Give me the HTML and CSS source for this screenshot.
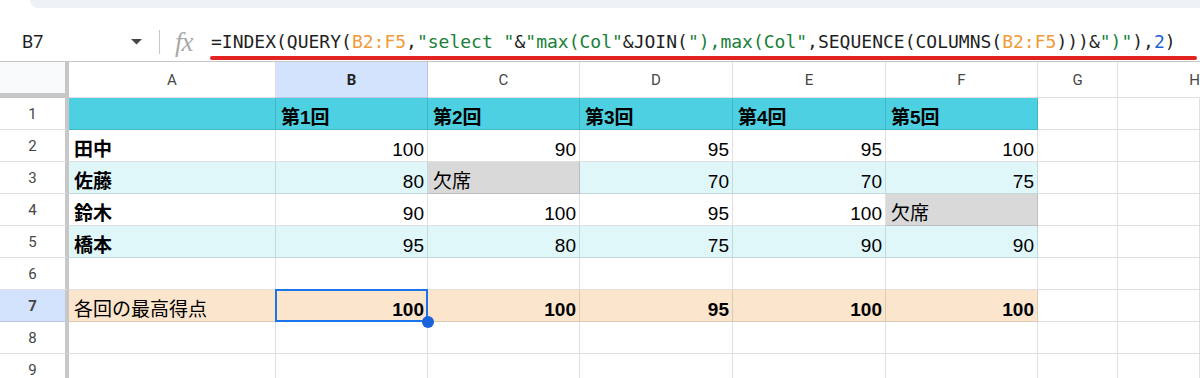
FILE: index.html
```html
<!DOCTYPE html>
<html lang="ja">
<head>
<meta charset="utf-8">
<link rel="stylesheet" href="styles.css">
</head>
<body>
<div class="topband"></div>
<div class="fbar">
  <div class="namebox">
    <span class="name">B7</span>
    <svg class="caret" width="11" height="6" viewBox="0 0 11 6"><path d="M0 0 L11 0 L5.5 5.5 Z" fill="#444746"/></svg>
  </div>
  <div class="divider"></div>
  <span class="fx">fx</span>
  <div class="formula"><span>=INDEX(QUERY(</span><span class="ref">B2:F5</span><span>,</span><span class="str">"select "</span><span>&amp;</span><span class="str">"max(Col"</span><span>&amp;JOIN(</span><span class="str">"),max(Col"</span><span>,SEQUENCE(COLUMNS(</span><span class="ref">B2:F5</span><span>)))&amp;</span><span class="str">")"</span><span>),</span><span class="num">2</span><span>)</span></div>
</div>
<div class="sheetwrap">
<div class="sheet">
  <div class="corner"></div>
  <div class="ch">A</div><div class="ch on">B</div><div class="ch">C</div><div class="ch">D</div><div class="ch">E</div><div class="ch">F</div><div class="ch">G</div><div class="ch last">H</div>

  <div class="rh">1</div>
  <div class="c hd"></div><div class="c hd b">第1回</div><div class="c hd b">第2回</div><div class="c hd b">第3回</div><div class="c hd b">第4回</div><div class="c hd b">第5回</div><div class="c"></div><div class="c"></div>

  <div class="rh">2</div>
  <div class="c b">田中</div><div class="c n">100</div><div class="c n">90</div><div class="c n">95</div><div class="c n">95</div><div class="c n">100</div><div class="c"></div><div class="c"></div>

  <div class="rh">3</div>
  <div class="c alt b">佐藤</div><div class="c alt n">80</div><div class="c gray">欠席</div><div class="c alt n">70</div><div class="c alt n">70</div><div class="c alt n">75</div><div class="c"></div><div class="c"></div>

  <div class="rh">4</div>
  <div class="c b">鈴木</div><div class="c n">90</div><div class="c n">100</div><div class="c n">95</div><div class="c n">100</div><div class="c gray">欠席</div><div class="c"></div><div class="c"></div>

  <div class="rh">5</div>
  <div class="c alt b">橋本</div><div class="c alt n">95</div><div class="c alt n">80</div><div class="c alt n">75</div><div class="c alt n">90</div><div class="c alt n">90</div><div class="c"></div><div class="c"></div>

  <div class="rh">6</div>
  <div class="c"></div><div class="c"></div><div class="c"></div><div class="c"></div><div class="c"></div><div class="c"></div><div class="c"></div><div class="c"></div>

  <div class="rh on">7</div>
  <div class="c peach">各回の最高得点</div><div class="c peach n b sel">100</div><div class="c peach n b">100</div><div class="c peach n b">95</div><div class="c peach n b">100</div><div class="c peach n b">100</div><div class="c"></div><div class="c"></div>

  <div class="rh">8</div>
  <div class="c"></div><div class="c"></div><div class="c"></div><div class="c"></div><div class="c"></div><div class="c"></div><div class="c"></div><div class="c"></div>

  <div class="rh">9</div>
  <div class="c"></div><div class="c"></div><div class="c"></div><div class="c"></div><div class="c"></div><div class="c"></div><div class="c"></div><div class="c"></div>
</div>
</div>
</body>
</html>
```

FILE: styles.css
```css
html, body {
  margin: 0;
  padding: 0;
  width: 1200px;
  height: 378px;
  overflow: hidden;
  background: #ffffff;
  font-family: "Liberation Sans", "Noto Sans CJK JP", sans-serif;
  color: #000;
}

.topband {
  height: 8px;
  margin-left: 30px;
  background: #eef1f6;
  border-bottom-left-radius: 14px;
}

.fbar {
  margin-top: 14px;
  height: 39px;
  border-bottom: 1px solid #c7c7c7;
  display: flex;
  align-items: center;
}

.namebox {
  width: 142px;
  box-sizing: border-box;
  padding-left: 22px;
  display: flex;
  align-items: center;
  justify-content: space-between;
}

.name {
  font-family: "Roboto", "Liberation Sans", sans-serif;
  font-size: 18px;
  line-height: 22px;
  color: #1f1f1f;
}

.caret {
  display: block;
  margin-top: 1px;
}

.divider {
  width: 1px;
  height: 24px;
  background: #c7c7c7;
  margin-left: 17px;
}

.fx {
  margin-left: 15px;
  font-family: "Liberation Serif", serif;
  font-style: italic;
  font-size: 27px;
  line-height: 22px;
  color: #a9a9a9;
  width: 24px;
  letter-spacing: -1px;
}

.formula {
  position: relative;
  margin-left: 12px;
  flex: 1;
  margin-right: 3px;
  font-family: "DejaVu Sans Mono", "Liberation Mono", monospace;
  font-size: 18px;
  line-height: 22px;
  color: #1f1f1f;
  white-space: nowrap;
}

.formula::after {
  content: "";
  position: absolute;
  left: -1px;
  right: 0;
  top: 25px;
  height: 4px;
  border-radius: 2px;
  background: #e3231f;
}

.ref { color: #ef9b3a; }
.str { color: #188038; }
.num { color: #1a62d0; }

.sheetwrap {
  width: 1200px;
  overflow: hidden;
}

.sheet {
  display: grid;
  grid-template-columns: 69px 207px 152px 152px 153px 153px 152px 80px 82px;
  grid-template-rows: 36px;
  grid-auto-rows: 32px;
}

.sheet > div {
  box-sizing: border-box;
  border-right: 1px solid rgba(0, 0, 0, 0.12);
  border-bottom: 1px solid rgba(0, 0, 0, 0.12);
}

.sheet > .corner {
  background: #f8f9fa;
  border-right: 4px solid #c7c7c7;
  border-bottom: 5px solid #c7c7c7;
}

.ch {
  display: flex;
  align-items: center;
  justify-content: center;
  font-family: "Roboto", "Liberation Sans", sans-serif;
  font-size: 15px;
  color: #444746;
  padding-top: 1px;
}

.sheet > .ch.last {
  justify-content: flex-end;
  padding-right: 0;
  border-right: none;
  overflow: hidden;
}

.sheet > .rh {
  display: flex;
  align-items: center;
  justify-content: center;
  font-family: "Roboto", "Liberation Sans", sans-serif;
  font-size: 15px;
  color: #444746;
  border-right: 4px solid #c7c7c7;
  padding-top: 1px;
}

.on {
  background: #d3e3fd;
  font-weight: 700;
  color: #1f1f1f;
}

.c {
  display: flex;
  align-items: flex-end;
  padding: 0 3px 0 5px;
  font-size: 19px;
  line-height: 22px;
  white-space: nowrap;
  overflow: visible;
}

.n { justify-content: flex-end; }
.b { font-weight: 700; }

.hd { background: #4dd0e1; }
.alt { background: #e0f7fa; }
.gray { background: #d9d9d9; }
.peach { background: #fce5cd; }

.sel {
  position: relative;
  z-index: 2;
}

.sel::before {
  content: "";
  position: absolute;
  left: -1px;
  top: -1px;
  right: -1px;
  bottom: -1px;
  border: 2px solid #1a73e8;
}

.sel::after {
  content: "";
  position: absolute;
  right: -7px;
  bottom: -7px;
  width: 12px;
  height: 12px;
  border-radius: 50%;
  background: #1a62d8;
}
```
